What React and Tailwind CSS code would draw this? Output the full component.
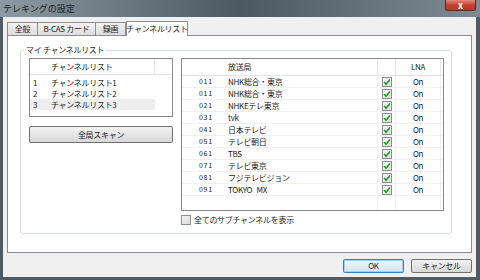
import React from 'react';

const channels = [
  ['011', 'NHK総合・東京'],
  ['011', 'NHK総合・東京'],
  ['021', 'NHKEテレ東京'],
  ['031', 'tvk'],
  ['041', '日本テレビ'],
  ['051', 'テレビ朝日'],
  ['061', 'TBS'],
  ['071', 'テレビ東京'],
  ['081', 'フジテレビジョン'],
  ['091', 'TOKYO   MX'],
];

const lists = ['チャンネルリスト1', 'チャンネルリスト2', 'チャンネルリスト3'];

const font = { fontFamily: '"Noto Sans CJK JP", "Liberation Sans", sans-serif' };

function Check() {
  return (
    <div className="w-[10px] h-[10px] border border-[#8f8f8f] bg-gradient-to-br from-[#f4f4f4] to-[#e0e0e0] flex items-center justify-center">
      <svg width="8" height="8" viewBox="0 0 8 8">
        <path d="M1 4 L3 6.2 L7 1.5" fill="none" stroke="#2f9a2f" strokeWidth="1.6" />
      </svg>
    </div>
  );
}

const tab = 'h-[13px] border border-b-0 border-[#8a8d94] bg-gradient-to-b from-[#f3f3f3] to-[#dcdcdc] flex items-center justify-center leading-none whitespace-nowrap';

export default function App() {
  return (
    <div className="w-[480px] h-[280px] bg-[#4f5a62] flex flex-col overflow-hidden text-[8px] tracking-[-0.3px] text-[#1a1a1a]" style={font}>
      {/* title bar */}
      <div className="h-[17px] flex items-start justify-between bg-gradient-to-r from-[#8d9aa3] via-[#4d5962] to-[#7e8b94]">
        <span className="pl-[3px] pt-[3px] text-[9px] text-[#222] leading-[11px] tracking-normal">テレキングの設定</span>
        <div className="mr-[4px] w-[31px] h-[11px] rounded-b-[3px] border border-t-0 border-[#5c2a22] bg-gradient-to-b from-[#e08a7c] via-[#c4402e] to-[#b83a28] flex items-center justify-center text-white text-[9px] font-bold leading-none">
          x
        </div>
      </div>

      {/* window body */}
      <div className="flex-1 ml-[3px] mr-[4px] mb-[3px] bg-[#f0f0f0] flex flex-col px-[4px]">
        {/* tabs */}
        <div className="flex items-end h-[18px]">
          <div className={`${tab} w-[31px]`}>全般</div>
          <div className={`${tab} w-[58px] border-l-0`}>B-CAS カード</div>
          <div className={`${tab} w-[30px] border-l-0`}>録画</div>
          <div className="h-[15px] w-[62px] -mb-px relative z-10 border border-b-0 border-[#8a8d94] bg-white flex items-center justify-center leading-none whitespace-nowrap">チャンネルリスト</div>
        </div>

        {/* panel */}
        <div className="h-[218px] border border-[#8a8d94] bg-white pt-[14px] pl-[12px] pr-[19px]">
          {/* group box */}
          <div className="relative h-[184px] border border-[#d5dfe5] rounded-[3px] flex gap-[8px] pl-[8px] pt-[7px]">
            <span className="absolute -top-[7px] left-[3px] bg-white px-[2px] leading-[12px]">マイ チャンネルリスト</span>

            {/* left column */}
            <div className="w-[144px] flex flex-col">
              <div className="h-[59px] border border-[#828790] bg-white">
                <div className="h-[16px] flex border-b border-[#e5e5e5] items-center">
                  <div className="w-[21px]" />
                  <div className="w-[104px] h-full border-r border-[#e5e5e5] flex items-center whitespace-nowrap">チャンネルリスト</div>
                </div>
                <div className="pt-[2px]">
                  {lists.map((l, i) => (
                    <div key={l} className={`h-[11px] w-[125px] flex items-center leading-none whitespace-nowrap ${i === 2 ? 'bg-[#eeeeee]' : ''}`}>
                      <span className="w-[21px] pl-[3px]">{i + 1}</span>
                      <span>{l}</span>
                    </div>
                  ))}
                </div>
              </div>
              <button className="mt-[9px] h-[17px] border border-[#707070] rounded-[2px] bg-gradient-to-b from-[#f2f2f2] to-[#d8d8d8] text-[8px] leading-none">
                全局スキャン
              </button>
            </div>

            {/* right column */}
            <div className="w-[263px] flex flex-col">
              <div className="h-[153px] border border-[#828790] bg-white flex flex-col">
                <div className="h-[17px] flex border-b border-[#e5e5e5] items-center shrink-0">
                  <div className="w-[44px] h-full" />
                  <div className="w-[152px] h-full border-r border-[#e5e5e5] flex items-center pl-[2px]">放送局</div>
                  <div className="w-[18px] h-full border-r border-[#e5e5e5]" />
                  <div className="w-[45px] h-full border-r border-[#e5e5e5] flex items-center justify-center">LNA</div>
                </div>
                {channels.map(([n, name], i) => (
                  <div key={i} className="h-[12px] flex items-center border-b border-[#f0f0f0] leading-none whitespace-pre">
                    <div className="w-[44px] text-right pr-[13px] text-[7px] tracking-[0.8px]">{n}</div>
                    <div className="w-[152px] h-full flex items-center pl-[2px] border-r border-[#f0f0f0]">{name}</div>
                    <div className="w-[18px] h-full flex items-center justify-center border-r border-[#f0f0f0]"><Check /></div>
                    <div className="w-[45px] h-full flex items-center justify-center border-r border-[#f0f0f0]">On</div>
                  </div>
                ))}
                <div className="flex-1 flex">
                  <div className="w-[44px]" />
                  <div className="w-[152px] border-r border-[#f0f0f0]" />
                  <div className="w-[18px] border-r border-[#f0f0f0]" />
                  <div className="w-[45px] border-r border-[#f0f0f0]" />
                </div>
              </div>
              <div className="mt-[4px] flex items-center gap-[3px]">
                <div className="w-[10px] h-[10px] border border-[#8f8f8f] bg-gradient-to-br from-[#f4f4f4] to-[#dcdcdc]" />
                <span className="leading-none">全てのサブチャンネルを表示</span>
              </div>
            </div>
          </div>
        </div>

        {/* bottom buttons */}
        <div className="flex justify-end gap-[7px] mt-[6px]">
          <button className="w-[61px] h-[14px] border border-[#3c7fb1] rounded-[2px] bg-gradient-to-b from-[#eef6fb] to-[#d4e4ef] text-[8px] leading-none shadow-[inset_0_0_0_1px_#9fd3f3]">OK</button>
          <button className="w-[61px] h-[14px] border border-[#707070] rounded-[2px] bg-gradient-to-b from-[#f2f2f2] to-[#d8d8d8] text-[8px] leading-none">キャンセル</button>
        </div>
      </div>
    </div>
  );
}
